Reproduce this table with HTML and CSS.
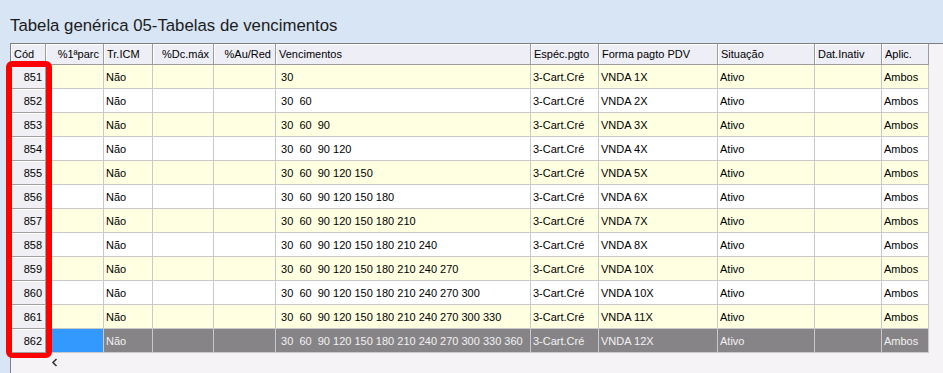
FILE: index.html
```html
<!DOCTYPE html>
<html lang="pt">
<head>
<meta charset="utf-8">
<title>Tabela genérica 05</title>
<link rel="stylesheet" href="styles.css">
</head>
<body>
<div class="page">
  <h1 class="title">Tabela genérica 05-Tabelas de vencimentos</h1>
  <div class="grid">
    <div class="row head">
      <div class="c">Cód</div>
      <div class="c r">%1ªparc</div>
      <div class="c">Tr.ICM</div>
      <div class="c r">%Dc.máx</div>
      <div class="c r">%Au/Red</div>
      <div class="c">Vencimentos</div>
      <div class="c">Espéc.pgto</div>
      <div class="c">Forma pagto PDV</div>
      <div class="c">Situação</div>
      <div class="c">Dat.Inativ</div>
      <div class="c">Aplic.</div>
    </div>
    <div class="row odd"><div class="c cod">851</div><div class="c"></div><div class="c">Não</div><div class="c"></div><div class="c"></div><div class="c venc"> 30</div><div class="c">3-Cart.Cré</div><div class="c">VNDA 1X</div><div class="c">Ativo</div><div class="c"></div><div class="c">Ambos</div></div>
    <div class="row"><div class="c cod">852</div><div class="c"></div><div class="c">Não</div><div class="c"></div><div class="c"></div><div class="c venc"> 30  60</div><div class="c">3-Cart.Cré</div><div class="c">VNDA 2X</div><div class="c">Ativo</div><div class="c"></div><div class="c">Ambos</div></div>
    <div class="row odd"><div class="c cod">853</div><div class="c"></div><div class="c">Não</div><div class="c"></div><div class="c"></div><div class="c venc"> 30  60  90</div><div class="c">3-Cart.Cré</div><div class="c">VNDA 3X</div><div class="c">Ativo</div><div class="c"></div><div class="c">Ambos</div></div>
    <div class="row"><div class="c cod">854</div><div class="c"></div><div class="c">Não</div><div class="c"></div><div class="c"></div><div class="c venc"> 30  60  90 120</div><div class="c">3-Cart.Cré</div><div class="c">VNDA 4X</div><div class="c">Ativo</div><div class="c"></div><div class="c">Ambos</div></div>
    <div class="row odd"><div class="c cod">855</div><div class="c"></div><div class="c">Não</div><div class="c"></div><div class="c"></div><div class="c venc"> 30  60  90 120 150</div><div class="c">3-Cart.Cré</div><div class="c">VNDA 5X</div><div class="c">Ativo</div><div class="c"></div><div class="c">Ambos</div></div>
    <div class="row"><div class="c cod">856</div><div class="c"></div><div class="c">Não</div><div class="c"></div><div class="c"></div><div class="c venc"> 30  60  90 120 150 180</div><div class="c">3-Cart.Cré</div><div class="c">VNDA 6X</div><div class="c">Ativo</div><div class="c"></div><div class="c">Ambos</div></div>
    <div class="row odd"><div class="c cod">857</div><div class="c"></div><div class="c">Não</div><div class="c"></div><div class="c"></div><div class="c venc"> 30  60  90 120 150 180 210</div><div class="c">3-Cart.Cré</div><div class="c">VNDA 7X</div><div class="c">Ativo</div><div class="c"></div><div class="c">Ambos</div></div>
    <div class="row"><div class="c cod">858</div><div class="c"></div><div class="c">Não</div><div class="c"></div><div class="c"></div><div class="c venc"> 30  60  90 120 150 180 210 240</div><div class="c">3-Cart.Cré</div><div class="c">VNDA 8X</div><div class="c">Ativo</div><div class="c"></div><div class="c">Ambos</div></div>
    <div class="row odd"><div class="c cod">859</div><div class="c"></div><div class="c">Não</div><div class="c"></div><div class="c"></div><div class="c venc"> 30  60  90 120 150 180 210 240 270</div><div class="c">3-Cart.Cré</div><div class="c">VNDA 10X</div><div class="c">Ativo</div><div class="c"></div><div class="c">Ambos</div></div>
    <div class="row"><div class="c cod">860</div><div class="c"></div><div class="c">Não</div><div class="c"></div><div class="c"></div><div class="c venc"> 30  60  90 120 150 180 210 240 270 300</div><div class="c">3-Cart.Cré</div><div class="c">VNDA 10X</div><div class="c">Ativo</div><div class="c"></div><div class="c">Ambos</div></div>
    <div class="row odd"><div class="c cod">861</div><div class="c"></div><div class="c">Não</div><div class="c"></div><div class="c"></div><div class="c venc"> 30  60  90 120 150 180 210 240 270 300 330</div><div class="c">3-Cart.Cré</div><div class="c">VNDA 11X</div><div class="c">Ativo</div><div class="c"></div><div class="c">Ambos</div></div>
    <div class="row sel"><div class="c cod">862</div><div class="c focus"></div><div class="c">Não</div><div class="c"></div><div class="c"></div><div class="c venc"> 30  60  90 120 150 180 210 240 270 300 330 360</div><div class="c">3-Cart.Cré</div><div class="c">VNDA 12X</div><div class="c">Ativo</div><div class="c"></div><div class="c">Ambos</div></div>
    <div class="hscroll">
      <svg class="arrow" width="8" height="9" viewBox="0 0 8 9"><polyline points="5.5,1 2,4.5 5.5,8" fill="none" stroke="#333" stroke-width="1.6"/></svg>
    </div>
  </div>
  <div class="mark"></div>
</div>
</body>
</html>
```

FILE: styles.css
```css
* { box-sizing: border-box; }
html, body {
  margin: 0;
  padding: 0;
  background: #d7e5f4;
  overflow: hidden;
}
.page {
  position: relative;
  width: 943px;
  height: 373px;
  font-family: "Liberation Sans", Arial, sans-serif;
  font-size: 11px;
  color: #000;
}
.title {
  margin: 0;
  padding: 16px 0 7px 10px;
  font-size: 16.8px;
  line-height: 20px;
  font-weight: normal;
  color: #1c1c1c;
}
.grid {
  margin-left: 10px;
  height: 330px;
  border-left: 1px solid #7f7f7f;
  border-top: 1px solid #7f7f7f;
  background: #f5f3f5;
  display: flex;
  flex-direction: column;
}
.row {
  display: grid;
  grid-template-columns: 35px 58px 49px 61px 62px 255px 68px 119px 97px 67px 47px;
  width: 918px;
  height: 24px;
  background: #fff;
}
.row.odd { background: #ffffe1; }
.row .c {
  border-right: 1px solid #c9c9c9;
  border-bottom: 1px solid #c9c9c9;
  padding: 0 2px;
  line-height: 24px;
  white-space: pre;
  overflow: hidden;
}
.row.head {
  height: 21px;
  background: #eeeef6;
}
.row.head .c {
  border-right: 1px solid #9c9c9c;
  border-bottom: 1px solid #9c9c9c;
  box-shadow: inset 1px 1px 0 #fff;
  line-height: 21px;
  padding: 0 3px;
}
.row.head .c.r {
  text-align: right;
  padding-right: 4px;
}
.row .c.cod {
  background: #efeff4;
  border-right: 1px solid #a0a0a0;
  border-bottom: 1px solid #a0a0a0;
  box-shadow: inset 1px 1px 0 #fff;
  text-align: right;
  padding-right: 3px;
}
.row.sel {
  background: #868486;
  color: #f2f2f2;
}
.row.sel .c.cod { color: #000; }
.row.sel .c.focus { background: #3399ff; }
.hscroll {
  flex: 1;
  padding: 5px 0 0 40px;
}
.arrow { display: block; }
.mark {
  position: absolute;
  left: 6px;
  top: 61px;
  width: 46px;
  height: 297px;
  border: 6px solid #ff0000;
  border-bottom-width: 5px;
  border-radius: 6px;
}
```
